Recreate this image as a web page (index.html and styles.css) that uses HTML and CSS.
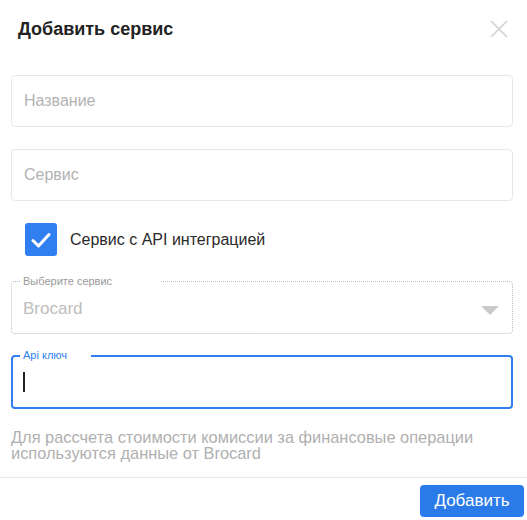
FILE: index.html
```html
<!DOCTYPE html>
<html lang="ru">
<head>
<meta charset="utf-8">
<title>Добавить сервис</title>
<link rel="stylesheet" href="styles.css">
</head>
<body>
<div class="modal">
  <div class="header">
    <h2 class="title">Добавить сервис</h2>
    <svg class="close" width="18" height="18" viewBox="0 0 18 18"><path d="M1 1L17 17M17 1L1 17" stroke="#cfcfcf" stroke-width="1.5" fill="none"/></svg>
  </div>
  <div class="body">
    <div class="input"><span class="placeholder">Название</span></div>
    <div class="input"><span class="placeholder">Сервис</span></div>
    <div class="check-row">
      <span class="checkbox"><svg width="20" height="16" viewBox="0 0 20 16"><path d="M2 8.5L7.5 14L18 2.5" stroke="#fff" stroke-width="3" fill="none" stroke-linecap="round" stroke-linejoin="round"/></svg></span>
      <span class="check-label">Сервис с API интеграцией</span>
    </div>
    <fieldset class="field select">
      <legend>Выберите сервис</legend>
      <div class="select-row">
        <span class="value">Brocard</span>
        <svg class="arrow" width="18" height="9" viewBox="0 0 18 9"><path d="M0 0H18L9 9Z" fill="#c9c9c9"/></svg>
      </div>
    </fieldset>
    <fieldset class="field api">
      <legend>Api ключ</legend>
      <div class="api-row"><span class="caret"></span></div>
    </fieldset>
    <p class="hint">Для рассчета стоимости комиссии за финансовые операции используются данные от Brocard</p>
  </div>
  <div class="footer">
    <button class="btn">Добавить</button>
  </div>
</div>
</body>
</html>
```

FILE: styles.css
```css
* { box-sizing: border-box; }
html, body { margin: 0; background: #fff; }
body { font-family: "Liberation Sans", Arial, sans-serif; color: #222; }
.modal { width: 527px; }
.header {
  display: flex;
  justify-content: space-between;
  align-items: flex-start;
  padding: 19px 19px 0 18px;
  height: 75px;
}
.title { margin: 0; font-size: 18px; line-height: 20px; font-weight: 700; color: #222; }
.close { margin-top: 1px; }
.body { padding: 0 14px 0 11px; }
.input {
  height: 52px;
  border: 1px solid #e8e8e8;
  border-radius: 4px;
  display: flex;
  align-items: center;
  padding-left: 12px;
  margin-bottom: 22px;
}
.placeholder { font-size: 16px; color: #b3b3b3; }
.check-row { display: flex; align-items: center; padding-left: 14px; margin-top: 2px; gap: 13px; }
.checkbox {
  width: 32px; height: 33px;
  background: #2f7ff0;
  border-radius: 3px;
  display: flex; align-items: center; justify-content: center;
}
.check-label { font-size: 16px; color: #2a2a2a; }
.field { margin: 0; min-width: 0; border-radius: 4px; }
.select {
  margin-top: 19px;
  border: 1px dotted #bdbdbd;
  padding: 0 13px 0 8px;
}
.field legend { font-size: 11px; line-height: 13px; padding: 0 3px; }
.select legend { color: #9a9a9a; padding-right: 49px; }
.select-row {
  display: flex; align-items: center; justify-content: space-between;
  padding: 11px 0 14px 3px;
  height: 45px;
}
.value { font-size: 17px; line-height: 20px; color: #bdbdbd; }
.arrow { margin-top: 2px; }
.api {
  margin-top: 15px;
  border: 2px solid #2f7ff0;
  padding: 0 10px 0 7px;
}
.api legend { color: #2f7ff0; padding-right: 24px; }
.api-row { height: 45px; padding: 10px 0 0 3px; }
.caret { display: block; width: 2px; height: 20px; background: #222; }
.hint {
  margin: 20px 0 0;
  font-size: 16.4px;
  line-height: 16px;
  color: #b0b0b0;
}
.footer {
  margin-top: 16px;
  border-top: 1px solid #e9e9e9;
  display: flex;
  justify-content: flex-end;
  padding: 7px 3px 0 0;
}
.btn {
  font-family: inherit;
  font-size: 17px;
  color: #fff;
  background: #2a7ae9;
  border: none;
  border-radius: 4px;
  height: 32px;
  width: 104px;
  padding: 0;
}
```
